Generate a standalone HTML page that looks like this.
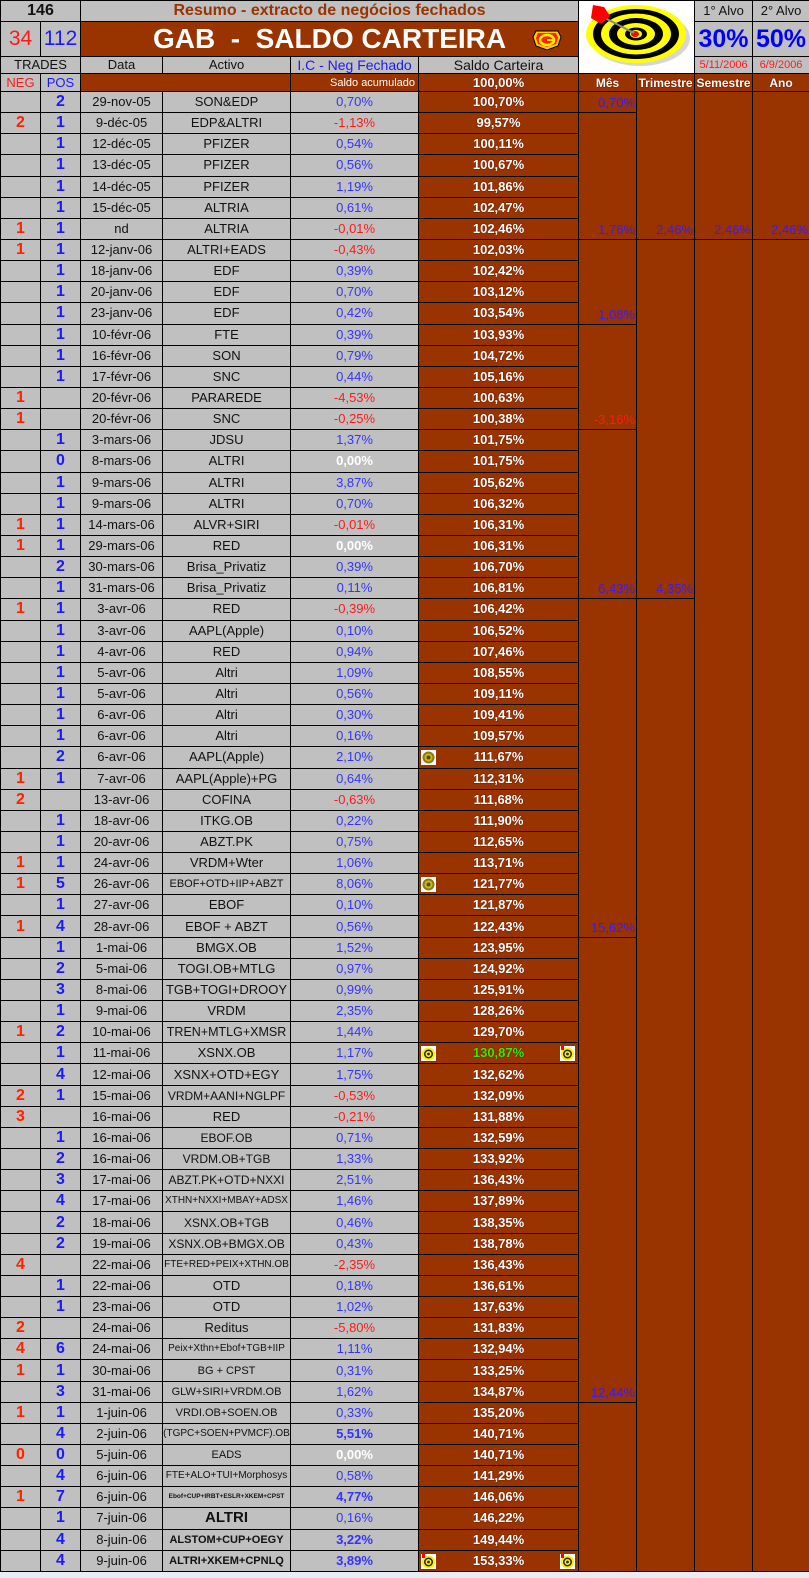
<!DOCTYPE html>
<html><head><meta charset="utf-8">
<style>
html,body{margin:0;padding:0;background:#e8ecf4;}
body{width:809px;height:1578px;overflow:hidden;position:relative;font-family:"Liberation Sans",Arial,sans-serif;}
table{border-collapse:collapse;table-layout:fixed;width:809px;position:absolute;left:0;top:0;}
td{border:1px solid #000;padding:0;text-align:center;vertical-align:middle;background:#c0c0c0;font-size:13px;color:#111;white-space:nowrap;overflow:hidden;line-height:14px;}
tr.d{height:21.15px;}
.b{background:#993300;}
.n{color:#ff2200;font-weight:bold;font-size:16px;}
.p{color:#1a1aff;font-weight:bold;font-size:16px;}
.ic{color:#3333ff;}
.ng{color:#ff1a1a;}
.z{color:#fff;font-weight:bold;}
.s{background:#993300;color:#fff;font-weight:bold;text-shadow:0 0 1px #300;position:relative;}
.m{background:#993300;color:#3a1aff;text-align:right;vertical-align:bottom;padding:0 1px 2px 0;}
.ico{position:absolute;top:3px;width:15px;height:15px;}
.l{left:2px}.r{right:3px}
.t{font-size:10px}
</style></head><body>
<table>
<colgroup><col style="width:40px"><col style="width:40px"><col style="width:82px"><col style="width:128px"><col style="width:128px"><col style="width:160px"><col style="width:58px"><col style="width:58px"><col style="width:58px"><col style="width:57px"></colgroup>
<tr style="height:21px"><td colspan="2" style="font-weight:bold;font-size:16px">146</td><td colspan="4" style="color:#993300;font-weight:bold;font-size:16px">Resumo - extracto de negócios fechados</td>
<td colspan="2" rowspan="3" style="background:#fff;position:relative"><svg width="116" height="72" viewBox="578 0 116 72" style="display:block">
<ellipse cx="639" cy="37" rx="50" ry="28" fill="#bbb" opacity=".6"/>
<ellipse cx="635" cy="33" rx="50" ry="29" fill="#ffff00"/>
<ellipse cx="635" cy="33" rx="43" ry="25" fill="#000"/>
<ellipse cx="635" cy="33" rx="35" ry="20.5" fill="#ffff00"/>
<ellipse cx="635" cy="33" rx="27" ry="16" fill="#000"/>
<ellipse cx="635" cy="33" rx="19" ry="11" fill="#ffff00"/>
<ellipse cx="635" cy="33" rx="11" ry="6.5" fill="#000"/>
<ellipse cx="635" cy="33" rx="6" ry="4" fill="#ffff00"/>
<ellipse cx="634" cy="33" rx="4" ry="3" fill="#f00"/>
<line x1="633" y1="32" x2="600" y2="15" stroke="#888" stroke-width="2"/>
<polygon points="592,4 603,6 609,15 600,23 590,17" fill="#f00"/>
</svg></td>
<td style="font-size:13px">1° Alvo</td><td style="font-size:13px">2° Alvo</td></tr>
<tr style="height:35px"><td style="color:#ff1a1a;font-size:21px">34</td><td style="color:#1a1aff;font-size:21px">112</td>
<td colspan="4" class="b" style="color:#fff;font-weight:bold;font-size:28px;white-space:pre;position:relative;line-height:30px">GAB  -  SALDO CARTEIRA<svg style="position:absolute;left:451px;top:7px" width="30" height="22" viewBox="0 0 30 22"><polygon points="4,2 26,2 29,8 26,17 15,21 4,17 1,8" fill="#ffcc00" stroke="#000" stroke-width="1"/><polygon points="6,4 24,4 26,9 24,15 15,18 6,15 4,9" fill="#ff2200"/><ellipse cx="15" cy="11" rx="7" ry="5" fill="none" stroke="#ffee00" stroke-width="2.5"/><line x1="15" y1="11" x2="22" y2="11" stroke="#ffee00" stroke-width="2"/></svg></td>
<td style="color:#0000ff;font-weight:bold;font-size:25px">30%</td><td style="color:#0000ff;font-weight:bold;font-size:25px">50%</td></tr>
<tr style="height:17px"><td colspan="2" style="font-size:13px">TRADES</td><td>Data</td><td>Activo</td><td style="color:#1a1aff;font-size:14px">I.C - Neg Fechado</td><td style="font-size:14px">Saldo Carteira</td><td style="color:#ff1a1a;font-size:11px">5/11/2006</td><td style="color:#ff1a1a;font-size:11px">6/9/2006</td></tr>
<tr style="height:18px"><td style="color:#ff1a1a">NEG</td><td style="color:#1a1aff">POS</td><td colspan="2" class="b"></td><td class="b" style="color:#fff;font-size:11px;text-align:right;padding-right:3px">Saldo acumulado</td><td class="s">100,00%</td><td class="s" style="font-size:12px">Mês</td><td class="s" style="font-size:12px">Trimestre</td><td class="s" style="font-size:12px">Semestre</td><td class="s" style="font-size:12px">Ano</td></tr>

<tr class="d"><td></td><td class="p">2</td><td>29-nov-05</td><td>SON&amp;EDP</td><td class="ic">0,70%</td><td class="s">100,70%</td><td class="m">0,70%</td><td class="m" rowspan="7">2,46%</td><td class="m" rowspan="7">2,46%</td><td class="m" rowspan="7">2,46%</td></tr>
<tr class="d"><td class="n">2</td><td class="p">1</td><td>9-déc-05</td><td>EDP&amp;ALTRI</td><td class="ng">-1,13%</td><td class="s">99,57%</td><td class="m" rowspan="6">1,76%</td></tr>
<tr class="d"><td></td><td class="p">1</td><td>12-déc-05</td><td>PFIZER</td><td class="ic">0,54%</td><td class="s">100,11%</td></tr>
<tr class="d"><td></td><td class="p">1</td><td>13-déc-05</td><td>PFIZER</td><td class="ic">0,56%</td><td class="s">100,67%</td></tr>
<tr class="d"><td></td><td class="p">1</td><td>14-déc-05</td><td>PFIZER</td><td class="ic">1,19%</td><td class="s">101,86%</td></tr>
<tr class="d"><td></td><td class="p">1</td><td>15-déc-05</td><td>ALTRIA</td><td class="ic">0,61%</td><td class="s">102,47%</td></tr>
<tr class="d"><td class="n">1</td><td class="p">1</td><td>nd</td><td>ALTRIA</td><td class="ng">-0,01%</td><td class="s">102,46%</td></tr>
<tr class="d"><td class="n">1</td><td class="p">1</td><td>12-janv-06</td><td>ALTRI+EADS</td><td class="ng">-0,43%</td><td class="s">102,03%</td><td class="m" rowspan="4">1,08%</td><td class="m" rowspan="17">4,35%</td><td class="m" rowspan="63"></td><td class="m" rowspan="63"></td></tr>
<tr class="d"><td></td><td class="p">1</td><td>18-janv-06</td><td>EDF</td><td class="ic">0,39%</td><td class="s">102,42%</td></tr>
<tr class="d"><td></td><td class="p">1</td><td>20-janv-06</td><td>EDF</td><td class="ic">0,70%</td><td class="s">103,12%</td></tr>
<tr class="d"><td></td><td class="p">1</td><td>23-janv-06</td><td>EDF</td><td class="ic">0,42%</td><td class="s">103,54%</td></tr>
<tr class="d"><td></td><td class="p">1</td><td>10-févr-06</td><td>FTE</td><td class="ic">0,39%</td><td class="s">103,93%</td><td class="m" rowspan="5" style="color:#ff1a1a">-3,16%</td></tr>
<tr class="d"><td></td><td class="p">1</td><td>16-févr-06</td><td>SON</td><td class="ic">0,79%</td><td class="s">104,72%</td></tr>
<tr class="d"><td></td><td class="p">1</td><td>17-févr-06</td><td>SNC</td><td class="ic">0,44%</td><td class="s">105,16%</td></tr>
<tr class="d"><td class="n">1</td><td></td><td>20-févr-06</td><td>PARAREDE</td><td class="ng">-4,53%</td><td class="s">100,63%</td></tr>
<tr class="d"><td class="n">1</td><td></td><td>20-févr-06</td><td>SNC</td><td class="ng">-0,25%</td><td class="s">100,38%</td></tr>
<tr class="d"><td></td><td class="p">1</td><td>3-mars-06</td><td>JDSU</td><td class="ic">1,37%</td><td class="s">101,75%</td><td class="m" rowspan="8">6,43%</td></tr>
<tr class="d"><td></td><td class="p">0</td><td>8-mars-06</td><td>ALTRI</td><td class="z">0,00%</td><td class="s">101,75%</td></tr>
<tr class="d"><td></td><td class="p">1</td><td>9-mars-06</td><td>ALTRI</td><td class="ic">3,87%</td><td class="s">105,62%</td></tr>
<tr class="d"><td></td><td class="p">1</td><td>9-mars-06</td><td>ALTRI</td><td class="ic">0,70%</td><td class="s">106,32%</td></tr>
<tr class="d"><td class="n">1</td><td class="p">1</td><td>14-mars-06</td><td>ALVR+SIRI</td><td class="ng">-0,01%</td><td class="s">106,31%</td></tr>
<tr class="d"><td class="n">1</td><td class="p">1</td><td>29-mars-06</td><td>RED</td><td class="z">0,00%</td><td class="s">106,31%</td></tr>
<tr class="d"><td></td><td class="p">2</td><td>30-mars-06</td><td>Brisa_Privatiz</td><td class="ic">0,39%</td><td class="s">106,70%</td></tr>
<tr class="d"><td></td><td class="p">1</td><td>31-mars-06</td><td>Brisa_Privatiz</td><td class="ic">0,11%</td><td class="s">106,81%</td></tr>
<tr class="d"><td class="n">1</td><td class="p">1</td><td>3-avr-06</td><td>RED</td><td class="ng">-0,39%</td><td class="s">106,42%</td><td class="m" rowspan="16">15,62%</td><td class="m" rowspan="46"></td></tr>
<tr class="d"><td></td><td class="p">1</td><td>3-avr-06</td><td>AAPL(Apple)</td><td class="ic">0,10%</td><td class="s">106,52%</td></tr>
<tr class="d"><td></td><td class="p">1</td><td>4-avr-06</td><td>RED</td><td class="ic">0,94%</td><td class="s">107,46%</td></tr>
<tr class="d"><td></td><td class="p">1</td><td>5-avr-06</td><td>Altri</td><td class="ic">1,09%</td><td class="s">108,55%</td></tr>
<tr class="d"><td></td><td class="p">1</td><td>5-avr-06</td><td>Altri</td><td class="ic">0,56%</td><td class="s">109,11%</td></tr>
<tr class="d"><td></td><td class="p">1</td><td>6-avr-06</td><td>Altri</td><td class="ic">0,30%</td><td class="s">109,41%</td></tr>
<tr class="d"><td></td><td class="p">1</td><td>6-avr-06</td><td>Altri</td><td class="ic">0,16%</td><td class="s">109,57%</td></tr>
<tr class="d"><td></td><td class="p">2</td><td>6-avr-06</td><td>AAPL(Apple)</td><td class="ic">2,10%</td><td class="s"><svg class="ico l" viewBox="0 0 15 15"><rect width="15" height="15" fill="#fff"/><circle cx="7.5" cy="7.5" r="6" fill="#8a7a10"/><circle cx="7.5" cy="7.5" r="4" fill="#c8b820"/><circle cx="7.5" cy="7.5" r="2" fill="#5a4a00"/></svg>111,67%</td></tr>
<tr class="d"><td class="n">1</td><td class="p">1</td><td>7-avr-06</td><td>AAPL(Apple)+PG</td><td class="ic">0,64%</td><td class="s">112,31%</td></tr>
<tr class="d"><td class="n">2</td><td></td><td>13-avr-06</td><td>COFINA</td><td class="ng">-0,63%</td><td class="s">111,68%</td></tr>
<tr class="d"><td></td><td class="p">1</td><td>18-avr-06</td><td>ITKG.OB</td><td class="ic">0,22%</td><td class="s">111,90%</td></tr>
<tr class="d"><td></td><td class="p">1</td><td>20-avr-06</td><td>ABZT.PK</td><td class="ic">0,75%</td><td class="s">112,65%</td></tr>
<tr class="d"><td class="n">1</td><td class="p">1</td><td>24-avr-06</td><td>VRDM+Wter</td><td class="ic">1,06%</td><td class="s">113,71%</td></tr>
<tr class="d"><td class="n">1</td><td class="p">5</td><td>26-avr-06</td><td style="font-size:11px">EBOF+OTD+IIP+ABZT</td><td class="ic">8,06%</td><td class="s"><svg class="ico l" viewBox="0 0 15 15"><rect width="15" height="15" fill="#fff"/><circle cx="7.5" cy="7.5" r="6" fill="#8a7a10"/><circle cx="7.5" cy="7.5" r="4" fill="#c8b820"/><circle cx="7.5" cy="7.5" r="2" fill="#5a4a00"/></svg>121,77%</td></tr>
<tr class="d"><td></td><td class="p">1</td><td>27-avr-06</td><td>EBOF</td><td class="ic">0,10%</td><td class="s">121,87%</td></tr>
<tr class="d"><td class="n">1</td><td class="p">4</td><td>28-avr-06</td><td>EBOF + ABZT</td><td class="ic">0,56%</td><td class="s">122,43%</td></tr>
<tr class="d"><td></td><td class="p">1</td><td>1-mai-06</td><td>BMGX.OB</td><td class="ic">1,52%</td><td class="s">123,95%</td><td class="m" rowspan="22">12,44%</td></tr>
<tr class="d"><td></td><td class="p">2</td><td>5-mai-06</td><td>TOGI.OB+MTLG</td><td class="ic">0,97%</td><td class="s">124,92%</td></tr>
<tr class="d"><td></td><td class="p">3</td><td>8-mai-06</td><td>TGB+TOGI+DROOY</td><td class="ic">0,99%</td><td class="s">125,91%</td></tr>
<tr class="d"><td></td><td class="p">1</td><td>9-mai-06</td><td>VRDM</td><td class="ic">2,35%</td><td class="s">128,26%</td></tr>
<tr class="d"><td class="n">1</td><td class="p">2</td><td>10-mai-06</td><td style="font-size:12.5px">TREN+MTLG+XMSR</td><td class="ic">1,44%</td><td class="s">129,70%</td></tr>
<tr class="d"><td></td><td class="p">1</td><td>11-mai-06</td><td>XSNX.OB</td><td class="ic">1,17%</td><td class="s" style="color:#33ee00"><svg class="ico l" viewBox="0 0 15 15"><rect width="15" height="15" fill="#fff"/><circle cx="7.5" cy="8" r="6.5" fill="#ffee00"/><circle cx="7.5" cy="8" r="4.5" fill="#222"/><circle cx="7.5" cy="8" r="3" fill="#ffee00"/><circle cx="7.5" cy="8" r="1.4" fill="#222"/></svg>130,87%<svg class="ico r" viewBox="0 0 15 15"><rect width="15" height="15" fill="#fff"/><circle cx="7.5" cy="8" r="6.5" fill="#ffee00"/><circle cx="7.5" cy="8" r="4.5" fill="#222"/><circle cx="7.5" cy="8" r="3" fill="#ffee00"/><circle cx="7.5" cy="8" r="1.4" fill="#222"/><rect x="1" y="0" width="3" height="4" fill="#f00"/></svg></td></tr>
<tr class="d"><td></td><td class="p">4</td><td>12-mai-06</td><td>XSNX+OTD+EGY</td><td class="ic">1,75%</td><td class="s">132,62%</td></tr>
<tr class="d"><td class="n">2</td><td class="p">1</td><td>15-mai-06</td><td style="font-size:12px">VRDM+AANI+NGLPF</td><td class="ng">-0,53%</td><td class="s">132,09%</td></tr>
<tr class="d"><td class="n">3</td><td></td><td>16-mai-06</td><td>RED</td><td class="ng">-0,21%</td><td class="s">131,88%</td></tr>
<tr class="d"><td></td><td class="p">1</td><td>16-mai-06</td><td style="font-size:12px">EBOF.OB</td><td class="ic">0,71%</td><td class="s">132,59%</td></tr>
<tr class="d"><td></td><td class="p">2</td><td>16-mai-06</td><td style="font-size:12px">VRDM.OB+TGB</td><td class="ic">1,33%</td><td class="s">133,92%</td></tr>
<tr class="d"><td></td><td class="p">3</td><td>17-mai-06</td><td style="font-size:12px">ABZT.PK+OTD+NXXI</td><td class="ic">2,51%</td><td class="s">136,43%</td></tr>
<tr class="d"><td></td><td class="p">4</td><td>17-mai-06</td><td class="t">XTHN+NXXI+MBAY+ADSX</td><td class="ic">1,46%</td><td class="s">137,89%</td></tr>
<tr class="d"><td></td><td class="p">2</td><td>18-mai-06</td><td style="font-size:12px">XSNX.OB+TGB</td><td class="ic">0,46%</td><td class="s">138,35%</td></tr>
<tr class="d"><td></td><td class="p">2</td><td>19-mai-06</td><td style="font-size:12px">XSNX.OB+BMGX.OB</td><td class="ic">0,43%</td><td class="s">138,78%</td></tr>
<tr class="d"><td class="n">4</td><td></td><td>22-mai-06</td><td class="t">FTE+RED+PEIX+XTHN.OB</td><td class="ng">-2,35%</td><td class="s">136,43%</td></tr>
<tr class="d"><td></td><td class="p">1</td><td>22-mai-06</td><td>OTD</td><td class="ic">0,18%</td><td class="s">136,61%</td></tr>
<tr class="d"><td></td><td class="p">1</td><td>23-mai-06</td><td>OTD</td><td class="ic">1,02%</td><td class="s">137,63%</td></tr>
<tr class="d"><td class="n">2</td><td></td><td>24-mai-06</td><td>Reditus</td><td class="ng">-5,80%</td><td class="s">131,83%</td></tr>
<tr class="d"><td class="n">4</td><td class="p">6</td><td>24-mai-06</td><td class="t">Peix+Xthn+Ebof+TGB+IIP</td><td class="ic">1,11%</td><td class="s">132,94%</td></tr>
<tr class="d"><td class="n">1</td><td class="p">1</td><td>30-mai-06</td><td style="font-size:11px">BG + CPST</td><td class="ic">0,31%</td><td class="s">133,25%</td></tr>
<tr class="d"><td></td><td class="p">3</td><td>31-mai-06</td><td style="font-size:11px">GLW+SIRI+VRDM.OB</td><td class="ic">1,62%</td><td class="s">134,87%</td></tr>
<tr class="d"><td class="n">1</td><td class="p">1</td><td>1-juin-06</td><td style="font-size:11px">VRDI.OB+SOEN.OB</td><td class="ic">0,33%</td><td class="s">135,20%</td><td class="m" rowspan="8"></td></tr>
<tr class="d"><td></td><td class="p">4</td><td>2-juin-06</td><td class="t">(TGPC+SOEN+PVMCF).OB</td><td class="ic" style="font-weight:bold">5,51%</td><td class="s">140,71%</td></tr>
<tr class="d"><td class="n">0</td><td class="p">0</td><td>5-juin-06</td><td style="font-size:11px">EADS</td><td class="z">0,00%</td><td class="s">140,71%</td></tr>
<tr class="d"><td></td><td class="p">4</td><td>6-juin-06</td><td class="t">FTE+ALO+TUI+Morphosys</td><td class="ic">0,58%</td><td class="s">141,29%</td></tr>
<tr class="d"><td class="n">1</td><td class="p">7</td><td>6-juin-06</td><td style="font-size:6.5px;font-weight:bold">Ebof+CUP+IRBT+ESLR+XKEM+CPST</td><td class="ic" style="font-weight:bold">4,77%</td><td class="s">146,06%</td></tr>
<tr class="d"><td></td><td class="p">1</td><td>7-juin-06</td><td style="font-size:15px;font-weight:bold">ALTRI</td><td class="ic">0,16%</td><td class="s">146,22%</td></tr>
<tr class="d"><td></td><td class="p">4</td><td>8-juin-06</td><td style="font-size:11px;font-weight:bold">ALSTOM+CUP+OEGY</td><td class="ic" style="font-weight:bold">3,22%</td><td class="s">149,44%</td></tr>
<tr class="d"><td></td><td class="p">4</td><td>9-juin-06</td><td style="font-size:11px;font-weight:bold">ALTRI+XKEM+CPNLQ</td><td class="ic" style="font-weight:bold">3,89%</td><td class="s"><svg class="ico l" viewBox="0 0 15 15"><rect width="15" height="15" fill="#fff"/><circle cx="7.5" cy="8" r="6.5" fill="#ffee00"/><circle cx="7.5" cy="8" r="4.5" fill="#222"/><circle cx="7.5" cy="8" r="3" fill="#ffee00"/><circle cx="7.5" cy="8" r="1.4" fill="#222"/><rect x="1" y="0" width="3" height="4" fill="#f00"/></svg>153,33%<svg class="ico r" viewBox="0 0 15 15"><rect width="15" height="15" fill="#fff"/><circle cx="7.5" cy="8" r="6.5" fill="#ffee00"/><circle cx="7.5" cy="8" r="4.5" fill="#222"/><circle cx="7.5" cy="8" r="3" fill="#ffee00"/><circle cx="7.5" cy="8" r="1.4" fill="#222"/><rect x="1" y="0" width="3" height="4" fill="#f00"/></svg></td></tr>
</table>
</body></html>
